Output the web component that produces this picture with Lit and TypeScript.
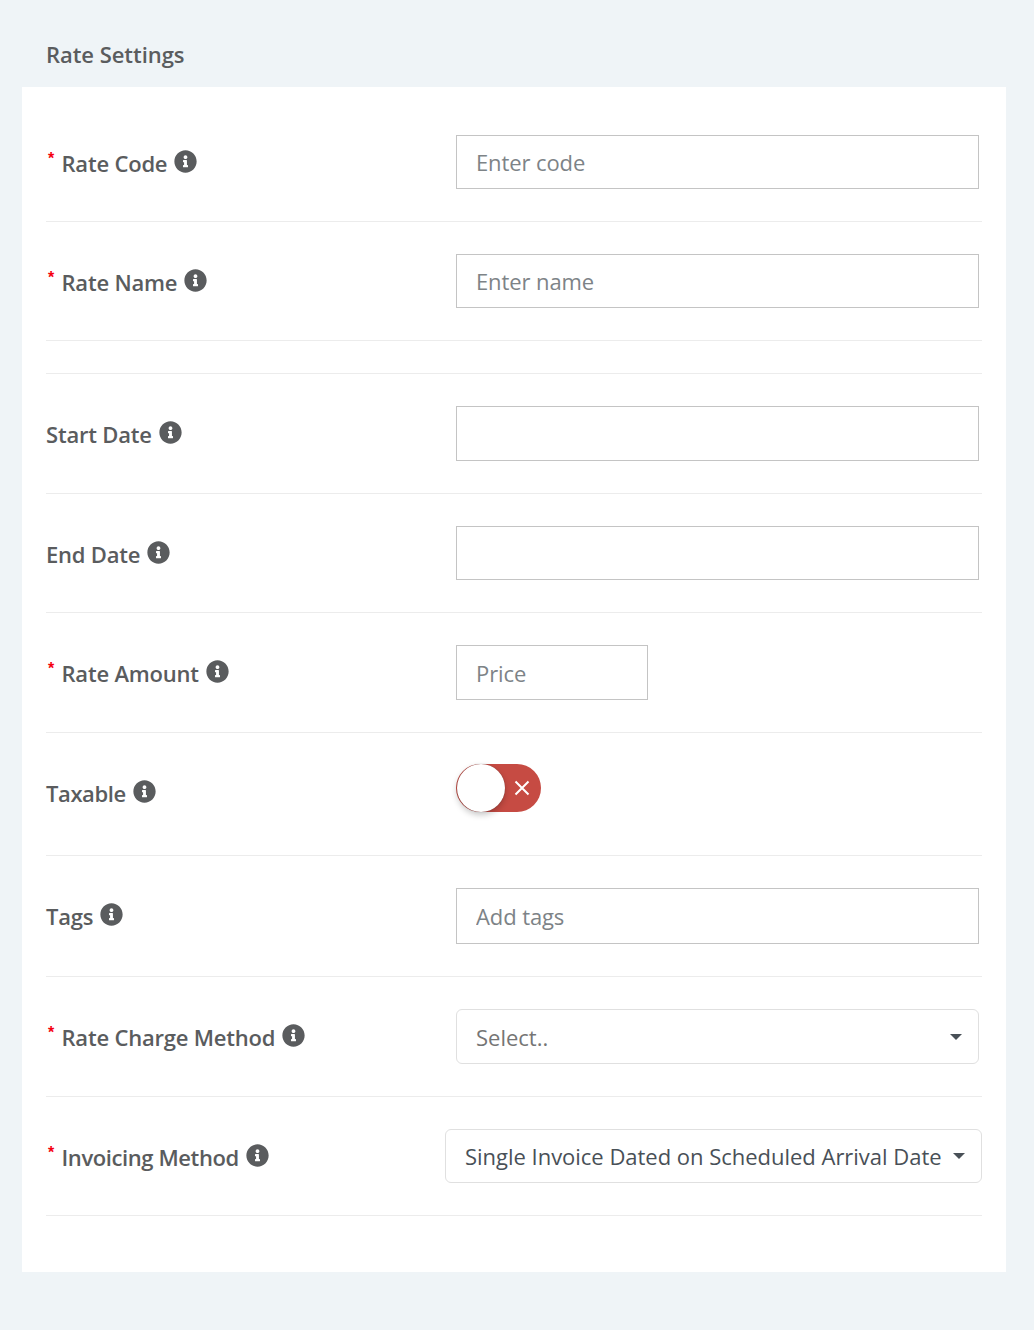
import { LitElement, html, css, nothing } from "lit";
import { customElement } from "lit/decorators.js";
import { classMap } from "lit/directives/class-map.js";

const INFO = html`<svg class="info" viewBox="0 0 512 512"><path fill="currentColor" d="M256 8C119.043 8 8 119.083 8 256c0 136.997 111.043 248 248 248s248-111.003 248-248C504 119.083 392.957 8 256 8zm0 110c23.196 0 42 18.804 42 42s-18.804 42-42 42-42-18.804-42-42 18.804-42 42-42zm56 254c0 6.627-5.373 12-12 12h-88c-6.627 0-12-5.373-12-12v-24c0-6.627 5.373-12 12-12h12v-64h-12c-6.627 0-12-5.373-12-12v-24c0-6.627 5.373-12 12-12h64c6.627 0 12 5.373 12 12v100h12c6.627 0 12 5.373 12 12v24z"/></svg>`;

@customElement("app-root")
export class AppRoot extends LitElement {
  static styles = css`
    :host { display: block; min-height: 1330px; background: #eff4f7; font-family: "Open Sans", "Noto Sans", sans-serif; color: #5a5c5e; box-sizing: border-box; padding: 0 28px 58px 22px; }
    .title { height: 87px; box-sizing: border-box; padding: 39px 0 0 24px; font-size: 22px; line-height: 30px; font-weight: 600; letter-spacing: -0.05px; }
    .card { background: #fff; padding: 48px 24px 56px; height: 1185px; box-sizing: border-box; }
    .row { display: flex; border-bottom: 1px solid #ececec; align-items: flex-start; box-sizing: border-box; padding-bottom: 32px; }
    .row + .row { padding-top: 32px; }
    .row.spacer { height: 33px; padding: 0; }
    .label { width: 410px; flex: none; display: flex; align-items: center; height: 54px; font-size: 22px; font-weight: 600; letter-spacing: -0.2px; gap: 7px; }
    .label.tight { letter-spacing: -0.4px; }
    .req { color: #f5000f; font: bold 16px/1 "Liberation Sans", sans-serif; width: 16px; margin-right: -7.5px; transform: translate(2px, -3px); }
    .txt { transform: translateY(1px); }
    .info { width: 23px; height: 23px; display: block; color: #5a5c5e; transform: translateY(-1px); }
    input { display: block; box-sizing: border-box; width: 523px; border: 1px solid #c4c4c4; background: #fff; padding: 0 19px; font: 22px "Open Sans", sans-serif; letter-spacing: -0.1px; color: #495057; outline: none; border-radius: 0; }
    input::placeholder { color: #7d8387; opacity: 1; }
    .h54 { height: 54px; }
    .h55 { height: 55px; }
    .h56 { height: 56px; }
    .price { width: 192px; }
    .select { box-sizing: border-box; width: 523px; height: 55px; border: 1px solid #e0e0e0; border-radius: 6px; display: flex; align-items: center; justify-content: space-between; padding: 0 16px 0 19px; font-size: 22px; color: #495057; }
    .select.last { width: 537px; margin-left: -11px; height: 54px; letter-spacing: -0.02px; }
    .placeholder { color: #757575; }
    .caret { width: 0; height: 0; border-left: 6px solid transparent; border-right: 6px solid transparent; border-top: 6px solid #495057; }
    .toggle { position: relative; width: 85px; height: 48px; background: #c64b43; border-radius: 24px; margin: -1px 0 11px; }
    .knob { position: absolute; left: 1px; top: 0; width: 48px; height: 48px; border-radius: 50%; background: #fff; box-shadow: 0 3px 6px rgba(0, 0, 0, 0.22), 0 0 1px rgba(0, 0, 0, 0.4); }
    .x { position: absolute; left: 57.5px; top: 16px; width: 16px; height: 16px; }
  `;

  private label(text: string, req = false, tight = false) {
    return html`<div class=${classMap({ label: true, tight })}>${req ? html`<span class="req">*</span>` : nothing}<span class="txt">${text}</span>${INFO}</div>`;
  }

  render() {
    return html`
      <div class="title">Rate Settings</div>
      <div class="card">
        <div class="row">${this.label("Rate Code", true)}<input class="h54" placeholder="Enter code" /></div>
        <div class="row">${this.label("Rate Name", true)}<input class="h54" placeholder="Enter name" /></div>
        <div class="row spacer"></div>
        <div class="row">${this.label("Start Date")}<input class="h55" /></div>
        <div class="row">${this.label("End Date")}<input class="h54" /></div>
        <div class="row">${this.label("Rate Amount", true)}<input class="h55 price" placeholder="Price" /></div>
        <div class="row">${this.label("Taxable", false, true)}
          <div class="toggle"><div class="knob"></div>
            <svg class="x" viewBox="0 0 16 16"><path d="M1.5 1.5l13 13M14.5 1.5l-13 13" stroke="#fff" stroke-width="2" fill="none"/></svg>
          </div>
        </div>
        <div class="row">${this.label("Tags")}<input class="h56" placeholder="Add tags" /></div>
        <div class="row">${this.label("Rate Charge Method", true)}<div class="select"><span class="placeholder">Select..</span><span class="caret"></span></div></div>
        <div class="row">${this.label("Invoicing Method", true, true)}<div class="select last"><span>Single Invoice Dated on Scheduled Arrival Date</span><span class="caret"></span></div></div>
      </div>
    `;
  }
}
